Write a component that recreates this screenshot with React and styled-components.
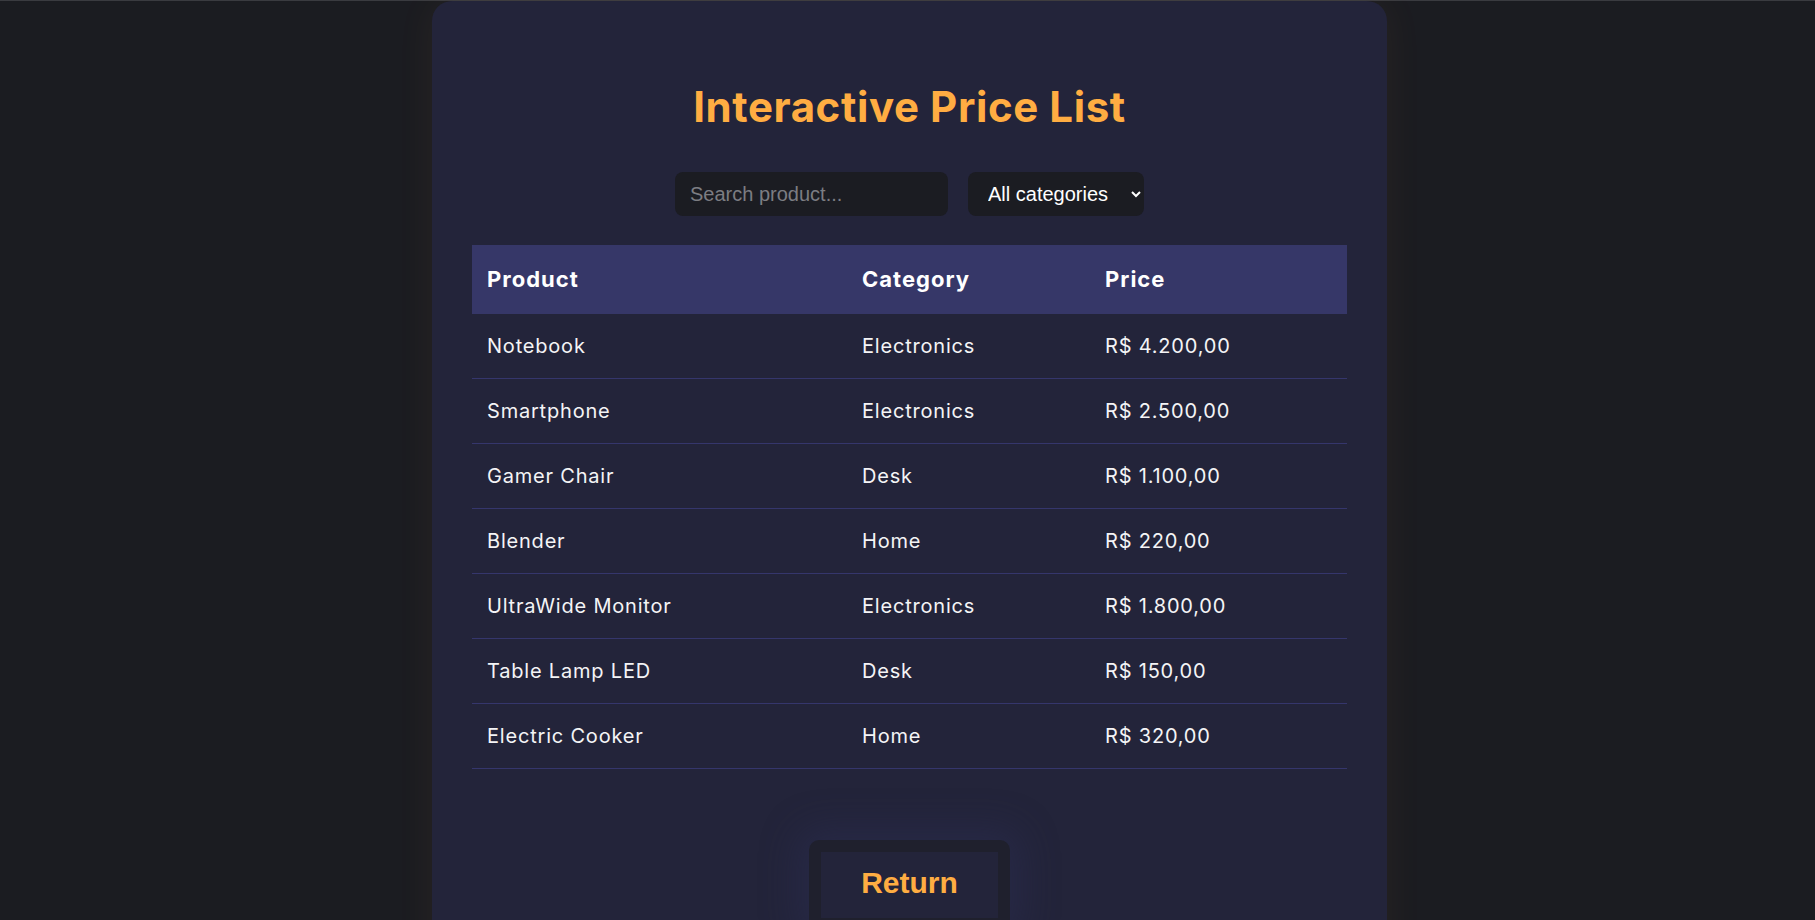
import React, { useState } from "react";
import styled, { createGlobalStyle } from "styled-components";

const GlobalStyle = createGlobalStyle`
  body {
    margin: 0;
    background: #1b1c21;
    font-family: Inter, "DejaVu Sans", sans-serif;
  }
`;

const Page = styled.div`
  min-height: 100vh;
  padding-left: 4px;
  border-top: 1px solid #3a3b40;
  background: #1b1c21;
`;

const Card = styled.main`
  width: 955px;
  box-sizing: border-box;
  margin: 0 auto;
  padding: 40px 40px 60px;
  background: #23243a;
  border-radius: 20px;
  box-shadow: 0 0 40px rgba(255, 170, 60, 0.06);
`;

const Title = styled.h1`
  margin: 40px 0 40px;
  text-align: center;
  color: #ffad42;
  font-family: Inter, sans-serif;
  font-size: 42px;
  font-weight: 700;
  letter-spacing: 0.6px;
`;

const Controls = styled.div`
  display: flex;
  justify-content: center;
  gap: 20px;
  margin-bottom: 29px;
`;

const SearchInput = styled.input`
  width: 273px;
  height: 44px;
  box-sizing: border-box;
  padding: 0 15px;
  border: none;
  border-radius: 8px;
  background: #1b1c22;
  color: #fff;
  font-family: "Liberation Sans", Arial, sans-serif;
  font-size: 20px;
  outline: none;

  &::placeholder {
    color: #7c7d82;
  }
`;

const CategorySelect = styled.select`
  width: 176px;
  height: 44px;
  box-sizing: border-box;
  padding: 0 10px 0 16px;
  border: none;
  border-radius: 8px;
  background: #1b1c22;
  color: #fff;
  font-family: "Liberation Sans", Arial, sans-serif;
  font-size: 20px;
  outline: none;
`;

const Table = styled.table`
  width: 100%;
  border-collapse: separate;
  border-spacing: 0;
  table-layout: fixed;
`;

const HeadCell = styled.th`
  width: ${(p) => p.$w}px;
  padding: 22px 15px;
  line-height: 25px;
  text-align: left;
  background: #363768;
  color: #fff;
  font-size: 22px;
  font-weight: 700;
  letter-spacing: 1px;
`;

const Cell = styled.td`
  padding: 20px 15px;
  line-height: 24px;
  border-bottom: 1px solid #35366c;
  color: #f4f4f6;
  font-size: 20px;
  font-weight: 400;
  letter-spacing: 0.8px;
  white-space: nowrap;
`;

const ButtonRow = styled.div`
  display: flex;
  justify-content: center;
  margin-top: 71px;
`;

const ReturnButton = styled.button`
  padding: 14px 40px 18px;
  border: 12px solid #1f202d;
  border-radius: 10px;
  background: #23243a;
  color: #ffad42;
  font-family: "Liberation Sans", Arial, sans-serif;
  font-size: 30px;
  font-weight: 700;
  cursor: pointer;
  box-shadow: 0 0 36px 12px rgba(44, 46, 84, 0.45);
`;

const products = [
  { name: "Notebook", category: "Electronics", price: 4200 },
  { name: "Smartphone", category: "Electronics", price: 2500 },
  { name: "Gamer Chair", category: "Desk", price: 1100 },
  { name: "Blender", category: "Home", price: 220 },
  { name: "UltraWide Monitor", category: "Electronics", price: 1800 },
  { name: "Table Lamp LED", category: "Desk", price: 150 },
  { name: "Electric Cooker", category: "Home", price: 320 },
];

const formatPrice = (value) =>
  "R$ " +
  value
    .toFixed(2)
    .replace(".", ",")
    .replace(/\B(?=(\d{3})+(?!\d))/g, ".");

export default function App() {
  const [search, setSearch] = useState("");
  const [category, setCategory] = useState("all");

  const visible = products.filter(
    (p) =>
      p.name.toLowerCase().includes(search.toLowerCase()) &&
      (category === "all" || p.category === category)
  );

  return (
    <Page>
      <GlobalStyle />
      <Card>
        <Title>Interactive Price List</Title>
        <Controls>
          <SearchInput
            placeholder="Search product..."
            value={search}
            onChange={(e) => setSearch(e.target.value)}
          />
          <CategorySelect
            value={category}
            onChange={(e) => setCategory(e.target.value)}
          >
            <option value="all">All categories</option>
            <option value="Electronics">Electronics</option>
            <option value="Desk">Desk</option>
            <option value="Home">Home</option>
          </CategorySelect>
        </Controls>
        <Table>
          <thead>
            <tr>
              <HeadCell $w={345}>Product</HeadCell>
              <HeadCell $w={213}>Category</HeadCell>
              <HeadCell $w={227}>Price</HeadCell>
            </tr>
          </thead>
          <tbody>
            {visible.map((p) => (
              <tr key={p.name}>
                <Cell>{p.name}</Cell>
                <Cell>{p.category}</Cell>
                <Cell>{formatPrice(p.price)}</Cell>
              </tr>
            ))}
          </tbody>
        </Table>
        <ButtonRow>
          <ReturnButton>Return</ReturnButton>
        </ButtonRow>
      </Card>
    </Page>
  );
}
